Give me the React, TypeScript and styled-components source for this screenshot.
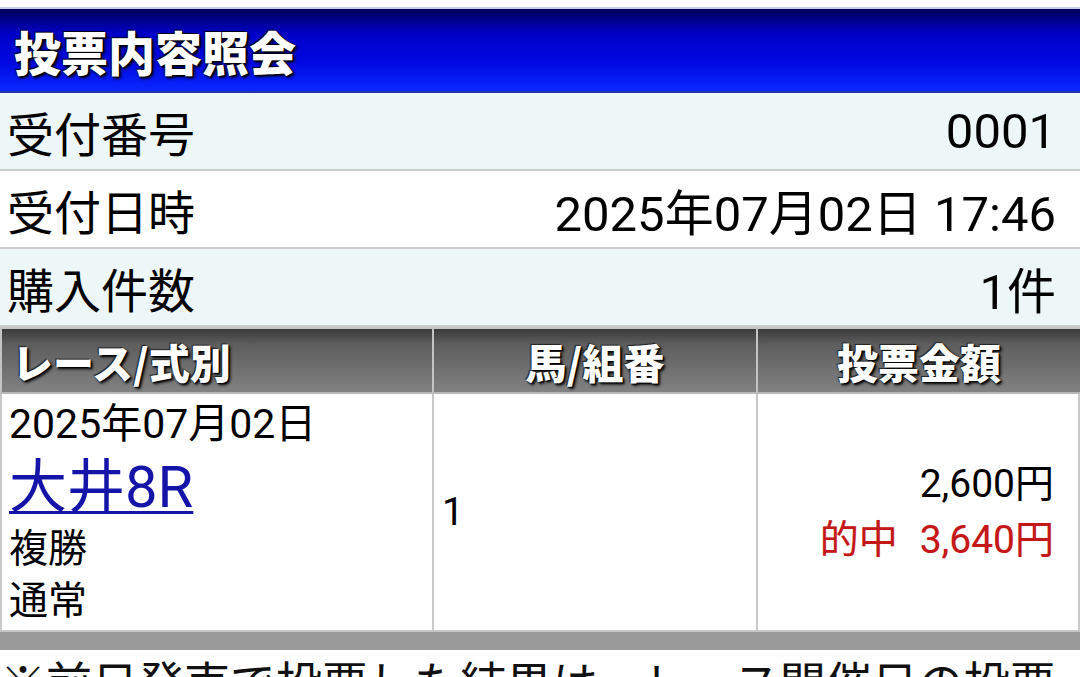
import React from "react";
import styled, { createGlobalStyle } from "styled-components";

const Global = createGlobalStyle`
  html, body { margin: 0; padding: 0; background: #fff; }
  body { font-family: Roboto, "Noto Sans CJK JP", sans-serif; color: #000; }
  * { box-sizing: border-box; }
`;

const Page = styled.div`
  width: 1080px;
  padding-top: 7px;
  overflow: hidden;
`;

const TitleBar = styled.h1`
  margin: 0;
  height: 86px;
  border-top: 2px solid #c4ccf2;
  border-bottom: 2px solid #2434a8;
  background: linear-gradient(to bottom, #00005a 0%, #0000c8 30%, #0008e0 65%, #0a28ff 100%);
  display: flex;
  align-items: center;
  padding-left: 14px;
  font-family: "Noto Sans CJK JP", sans-serif;
  font-weight: 900;
  font-size: 47px;
  color: #fff;
  letter-spacing: 0;
  text-shadow: 1px 1px 1px #000, -1px -1px 1px #001, 2px 2px 3px #000;
`;

const InfoRow = styled.div<{ $shade?: boolean }>`
  height: 78px;
  display: flex;
  align-items: center;
  justify-content: space-between;
  padding: 0 24px 0 7px;
  background: ${(p) => (p.$shade ? "#eef7f7" : "#ffffff")};
  border-bottom: 2px solid #cccccc;
  font-size: 47px;
`;

const Label = styled.span`
  font-family: "Noto Sans CJK JP", sans-serif;
`;

const Value = styled.span`
  font-family: Roboto, "Noto Sans CJK JP", sans-serif;
  font-size: 49px;
`;

const Table = styled.div`
  display: grid;
  grid-template-columns: 432px 324px 324px;
  border-top: 2px solid #c4c4c4;
`;

const HeadCell = styled.div<{ $align?: string }>`
  height: 65px;
  display: flex;
  align-items: center;
  justify-content: ${(p) => p.$align || "center"};
  padding: 0 10px;
  background: linear-gradient(to bottom, #3c3c3c 0%, #5e5e5e 25%, #6e6e6e 60%, #828282 100%);
  border-left: 2px solid #c4c4c4;
  border-bottom: 2px solid #b8b8b8;
  &:last-of-type { border-right: 2px solid #c4c4c4; }
  font-family: "Noto Sans CJK JP", sans-serif;
  font-weight: 900;
  font-size: 41px;
  color: #fff;
  text-shadow: 1px 1px 1px #000, -1px -1px 1px #222, 2px 2px 3px #000;
`;

const BodyCell = styled.div<{ $align?: string; $last?: boolean }>`
  height: 238px;
  display: flex;
  flex-direction: column;
  justify-content: center;
  align-items: ${(p) => p.$align || "flex-start"};
  padding: 0 24px 0 7px;
  border-left: 2px solid #c8c8c8;
  border-bottom: 2px solid #c8c8c8;
  border-right: ${(p) => (p.$last ? "2px solid #c8c8c8" : "none")};
  font-size: 39px;
  line-height: 52px;
`;

const RaceCell = styled(BodyCell)`
  justify-content: flex-start;
`;

const RaceLink = styled.a`
  font-size: 58px;
  line-height: 64px;
  color: #1414a8;
  text-decoration: underline;
  text-decoration-thickness: 3px;
  text-underline-offset: 4px;
  font-family: "Noto Sans CJK JP", Roboto, sans-serif;
`;

const RaceLinkNum = styled.span`
  font-family: Roboto, sans-serif;
`;

const Line = styled.div`
  white-space: nowrap;
`;

const DateLine = styled(Line)`
  font-size: 41px;
  margin-top: 4px;
`;

const CjkLine = styled(Line)`
  font-family: "Noto Sans CJK JP", sans-serif;
`;

const NumCell = styled(BodyCell)`
  padding-left: 8px;
`;

const Hit = styled(Line)`
  color: #c41818;
  text-shadow: 0 0 1px rgba(200, 30, 30, 0.35);
`;

const HitLabel = styled.span`
  font-family: "Noto Sans CJK JP", sans-serif;
  margin-right: 22px;
`;

const GrayBar = styled.div`
  height: 18px;
  background: #9a9a9a;
`;

const Note = styled.p`
  margin: 0;
  padding: 0;
  font-family: "Noto Sans CJK JP", sans-serif;
  font-size: 46px;
  line-height: 60px;
  color: #111;
`;

export default function App() {
  return (
    <>
      <Global />
      <Page>
        <TitleBar>投票内容照会</TitleBar>
        <InfoRow $shade>
          <Label>受付番号</Label>
          <Value>0001</Value>
        </InfoRow>
        <InfoRow>
          <Label>受付日時</Label>
          <Value>2025年07月02日 17:46</Value>
        </InfoRow>
        <InfoRow $shade>
          <Label>購入件数</Label>
          <Value>1件</Value>
        </InfoRow>
        <Table>
          <HeadCell $align="flex-start">レース/式別</HeadCell>
          <HeadCell>馬/組番</HeadCell>
          <HeadCell>投票金額</HeadCell>
          <RaceCell>
            <DateLine>2025年07月02日</DateLine>
            <RaceLink href="#">
              大井<RaceLinkNum>8R</RaceLinkNum>
            </RaceLink>
            <CjkLine>複勝</CjkLine>
            <CjkLine>通常</CjkLine>
          </RaceCell>
          <NumCell>
            <Line>1</Line>
          </NumCell>
          <BodyCell $align="flex-end" $last>
            <Line>2,600円</Line>
            <Hit>
              <HitLabel>的中</HitLabel>3,640円
            </Hit>
          </BodyCell>
        </Table>
        <GrayBar />
        <Note>※前日発売で投票した結果は、レース開催日の投票内容照会でご確認ください。</Note>
      </Page>
    </>
  );
}
